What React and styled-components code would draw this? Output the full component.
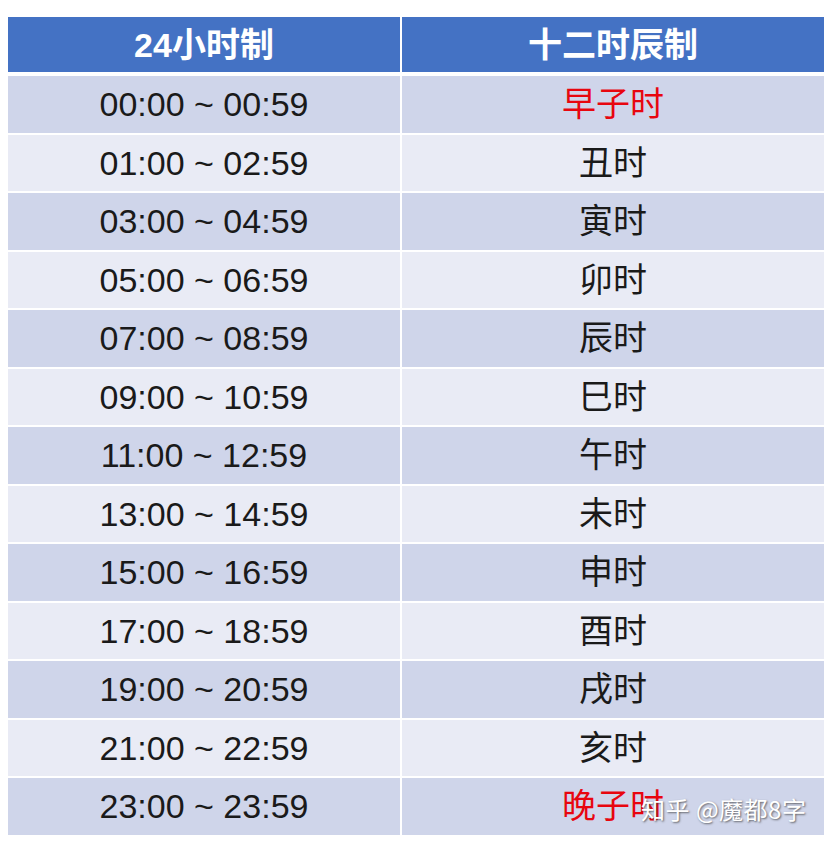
import React from "react";
import styled, { createGlobalStyle } from "styled-components";

const rows = [
  ["00:00 ~ 00:59", "早子时", true],
  ["01:00 ~ 02:59", "丑时"],
  ["03:00 ~ 04:59", "寅时"],
  ["05:00 ~ 06:59", "卯时"],
  ["07:00 ~ 08:59", "辰时"],
  ["09:00 ~ 10:59", "巳时"],
  ["11:00 ~ 12:59", "午时"],
  ["13:00 ~ 14:59", "未时"],
  ["15:00 ~ 16:59", "申时"],
  ["17:00 ~ 18:59", "酉时"],
  ["19:00 ~ 20:59", "戌时"],
  ["21:00 ~ 22:59", "亥时"],
  ["23:00 ~ 23:59", "晚子时", true],
];

const Global = createGlobalStyle`
  body {
    margin: 0;
    background: #fff;
    font-family: "Liberation Sans", "Noto Sans CJK SC", sans-serif;
  }
`;

const Page = styled.div`
  position: relative;
  width: 829px;
  height: 846px;
  padding: 17px 5px 0 8px;
  box-sizing: border-box;
`;

const Table = styled.div`
  display: flex;
  flex-direction: column;
  gap: 2px;
  width: 816px;
`;

const Line = styled.div`
  display: grid;
  grid-template-columns: 392px 422px;
  column-gap: 2px;
  height: ${(p) => (p.$head ? "55px" : "56.5px")};
  margin-bottom: ${(p) => (p.$head ? "2px" : "0")};
`;

const Cell = styled.div`
  display: flex;
  align-items: center;
  justify-content: center;
  line-height: 1;
  font-size: 34px;
  background: ${(p) => p.$bg};
  color: ${(p) => p.$color || "#1a1a1a"};
  font-weight: ${(p) => (p.$bold ? 700 : 400)};
`;

const Watermark = styled.div`
  position: absolute;
  left: 641px;
  top: 791px;
  font-family: "Noto Sans CJK SC", sans-serif;
  font-size: 24px;
  color: #fff;
  letter-spacing: 0.5px;
  text-shadow: 1px 1px 2px rgba(60, 60, 60, 0.75);
`;

export default function App() {
  return (
    <>
      <Global />
      <Page>
        <Table>
          <Line $head>
            <Cell $bg="#4472c4" $color="#fff" $bold>24小时制</Cell>
            <Cell $bg="#4472c4" $color="#fff" $bold>十二时辰制</Cell>
          </Line>
          {rows.map(([time, name, red], i) => {
            const bg = i % 2 === 0 ? "#cfd5ea" : "#e9ebf5";
            return (
              <Line key={time}>
                <Cell $bg={bg}>{time}</Cell>
                <Cell $bg={bg} $color={red ? "#e8060f" : "#1a1a1a"}>{name}</Cell>
              </Line>
            );
          })}
        </Table>
        <Watermark>知乎 @魔都8字</Watermark>
      </Page>
    </>
  );
}
